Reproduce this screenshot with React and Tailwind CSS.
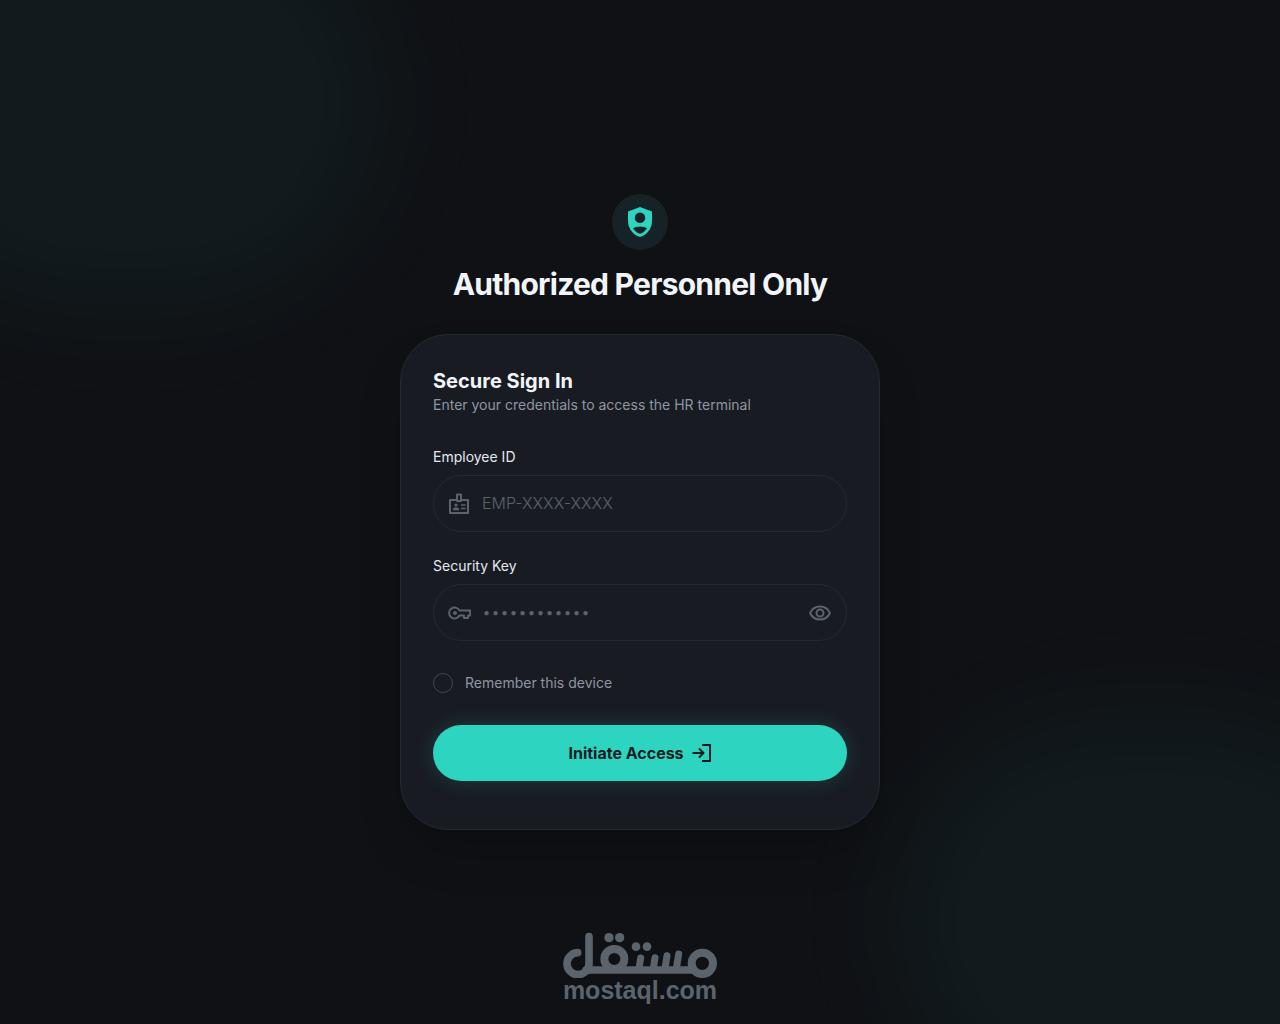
import { useState } from 'react';

const ShieldPerson = ({ className = 'size-9' }) => (
  <svg className={className} viewBox="0 -960 960 960" fill="currentColor" aria-hidden="true">
    <path
      fillRule="evenodd"
      d="M480-80q-139-35-229.5-159.5T160-516v-244l320-120 320 120v244q0 152-90.5 276.5T480-80ZM480-455q58 0 99-41t41-99q0-58-41-99t-99-41q-58 0-99 41t-41 99q0 58 41 99t99 41ZM480-164q60-19 107-57t81-91q-44-22-91-35t-97-13q-50 0-97 13t-91 35q34 53 81 91t107 57Z"
    />
  </svg>
);

const BadgeIcon = ({ className = 'size-6 shrink-0' }) => (
  <svg className={className} viewBox="0 0 24 24" fill="none" stroke="currentColor" strokeWidth="2" strokeLinejoin="round" aria-hidden="true">
    <path d="M10 8H3V21H21V8H14" />
    <rect x="10" y="2.5" width="4" height="6.5" />
    <path d="M14 13H18.5M14 16.5H18.5" strokeWidth="1.5" />
    <g fill="currentColor" stroke="none">
      <circle cx="9" cy="13" r="1.6" />
      <path d="M5.8 18.2C5.8 16.3 7 15.3 9 15.3S12.2 16.3 12.2 18.2Z" />
    </g>
  </svg>
);

const KeyIcon = ({ className = 'size-6 shrink-0' }) => (
  <svg className={className} viewBox="0 0 24 24" fill="none" stroke="currentColor" strokeWidth="2" strokeLinejoin="round" aria-hidden="true">
    <path d="M12.5 9.5A5.5 5.5 0 1 0 12.5 14.5H17V17H21V14.5H23.2V9.5Z" />
    <circle cx="8" cy="12" r="2" fill="currentColor" stroke="none" />
  </svg>
);

const EyeIcon = ({ off }) => (
  <svg className="size-6" viewBox="0 0 24 24" fill="none" stroke="currentColor" strokeWidth="2" aria-hidden="true">
    <path d="M2.1 12C3.9 8 7.6 5.5 12 5.5S20.1 8 21.9 12C20.1 16 16.4 18.5 12 18.5S3.9 16 2.1 12Z" />
    <circle cx="12" cy="12" r="3.5" />
    {off && <path d="M4 4L20 20" />}
  </svg>
);

const LoginIcon = ({ className = 'size-5' }) => (
  <svg className={className} viewBox="0 0 20 20" fill="none" stroke="currentColor" strokeWidth="2" strokeLinejoin="round" aria-hidden="true">
    <path d="M10 2H18V18H10M0.5 10H11M7 5.5L11.5 10L7 14.5" />
  </svg>
);

const MostaqlMark = () => (
  <svg className="h-[46px] w-[156px]" viewBox="36 36 468 138" fill="none" stroke="currentColor" strokeLinecap="round" aria-hidden="true">
    <circle cx="457" cy="130" r="32" strokeWidth="24" />
    <circle cx="193" cy="117" r="30" strokeWidth="24" />
    <path d="M83 98A33 33 0 1 0 117 131V50" strokeWidth="23" />
    <path d="M108 150H430" strokeWidth="23" />
    <path d="M272 114L267 146M315 113L310 146M351 107L345 146M386 102L379 146" strokeWidth="21" />
    <g fill="currentColor" stroke="none">
      <circle cx="177" cy="53" r="14" />
      <circle cx="209" cy="53" r="14" />
      <circle cx="258" cy="80" r="13" />
      <circle cx="291" cy="80" r="13" />
    </g>
  </svg>
);

function Field({ id, label, icon: Icon, children, ...props }) {
  return (
    <div className="flex flex-col gap-2">
      <label htmlFor={id} className="text-sm text-slate-200">{label}</label>
      <div className="flex h-[57px] items-center gap-[11px] rounded-full border border-[#1f2c31] pr-3.5 pl-[13px] text-[#5b636d] focus-within:border-[#2dd4bf]">
        <Icon />
        <input
          id={id}
          className="min-w-0 flex-1 bg-transparent pb-0.5 text-base font-light text-slate-100 outline-none placeholder:text-[#59636d]"
          {...props}
        />
        {children}
      </div>
    </div>
  );
}

export default function App() {
  const [showKey, setShowKey] = useState(false);

  return (
    <div className="relative flex min-h-screen flex-col items-center justify-center overflow-hidden bg-[#101115] px-4 font-['Inter',sans-serif] text-slate-100">
      {/* Ambient glow */}
      <div className="absolute -top-[10%] -left-[10%] h-[40%] w-[40%] rounded-full bg-[#2dd4bf]/5 blur-[52px]" />
      <div className="absolute -right-[10%] -bottom-[10%] h-[40%] w-[40%] rounded-full bg-[#2dd4bf]/5 blur-[52px]" />

      <main className="relative w-full max-w-[480px]">
        <header className="mb-8 flex flex-col items-center gap-4">
          <div className="flex size-14 items-center justify-center rounded-full bg-[#172227] text-[#2dd4bf]">
            <ShieldPerson />
          </div>
          <h1 className="text-3xl font-bold tracking-tight">Authorized Personnel Only</h1>
        </header>

        <section className="rounded-[48px] border border-[#1f2c31] bg-[#191b23] px-8 pt-8 pb-12 shadow-2xl">
          <div className="mb-8">
            <h2 className="text-xl font-bold">Secure Sign In</h2>
            <p className="text-sm text-[#8d96a1]">Enter your credentials to access the HR terminal</p>
          </div>

          <form className="flex flex-col gap-6" onSubmit={(e) => e.preventDefault()}>
            <Field id="employee-id" label="Employee ID" icon={BadgeIcon} type="text" placeholder="EMP-XXXX-XXXX" />
            <Field
              id="security-key"
              label="Security Key"
              icon={KeyIcon}
              type={showKey ? 'text' : 'password'}
              placeholder="••••••••••••"
            >
              <button type="button" onClick={() => setShowKey(!showKey)} aria-label="Toggle security key visibility">
                <EyeIcon off={showKey} />
              </button>
            </Field>

            <div className="flex items-center gap-3 py-2">
              <input
                id="remember"
                type="checkbox"
                className="size-5 appearance-none rounded-full border border-[#3b4a50] checked:bg-[#2dd4bf]"
              />
              <label htmlFor="remember" className="text-sm text-[#8d96a1]">Remember this device</label>
            </div>

            <button
              type="submit"
              className="flex h-14 items-center justify-center gap-2 rounded-full bg-[#2dd4bf] font-bold text-[#191b23] shadow-[0_0_20px_rgba(45,212,191,0.2)]"
            >
              <span>Initiate Access</span>
              <LoginIcon />
            </button>
          </form>
        </section>
      </main>

      {/* Watermark */}
      <div className="absolute bottom-[22px] left-1/2 flex -translate-x-1/2 flex-col items-center text-[#5b636d]">
        <MostaqlMark />
        <span className="font-['Liberation_Sans',sans-serif] text-[25px] leading-6 font-bold">mostaql.com</span>
      </div>
    </div>
  );
}
